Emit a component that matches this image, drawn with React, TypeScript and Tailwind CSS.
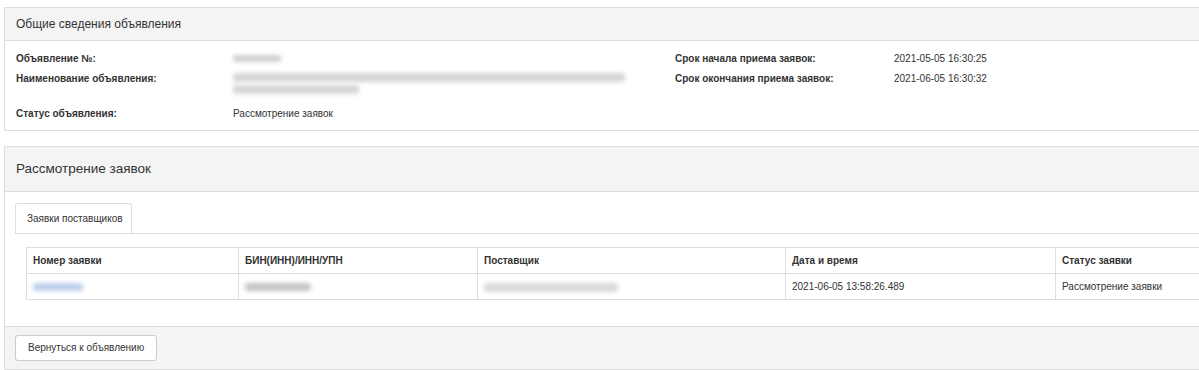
import React from "react";

function Blur({ w, h = 8, color = "#bdbdbd", className = "" }: { w: number; h?: number; color?: string; className?: string }) {
  return (
    <span
      className={"inline-block rounded-[3px] blur-[2px] align-middle " + className}
      style={{ width: w, height: h, backgroundColor: color }}
    />
  );
}

export default function App() {
  return (
    <div className="w-[1199px] h-[370px] overflow-hidden bg-white text-[#333] font-['Liberation_Sans',Arial,sans-serif]">
      <div className="pt-[7px] pl-[4px]">
        {/* Panel 1 */}
        <div className="w-[1215px] border border-[#ddd]">
          <div className="h-[33px] bg-[#f4f4f4] border-b border-[#ddd] px-[11px] flex items-center text-[12px]">
            Общие сведения объявления
          </div>
          <div className="pt-[10px] pb-[9px] px-[11px] flex text-[10px] leading-[15px]">
            <div className="w-[659px] flex flex-col gap-[5px]">
              <div className="flex">
                <div className="w-[217px] font-bold">Объявление №:</div>
                <div className="flex items-center"><Blur w={48} h={7} color="#cfcfcf" /></div>
              </div>
              <div className="flex h-[30px]">
                <div className="w-[217px] font-bold">Наименование объявления:</div>
                <div className="flex flex-col gap-[3px] pt-[2px]">
                  <Blur w={392} h={9} color="#d6d6d6" />
                  <Blur w={126} h={9} color="#d6d6d6" />
                </div>
              </div>
              <div className="flex">
                <div className="w-[217px] font-bold">Статус объявления:</div>
                <div>Рассмотрение заявок</div>
              </div>
            </div>
            <div className="flex flex-col gap-[5px]">
              <div className="flex">
                <div className="w-[219px] font-bold">Срок начала приема заявок:</div>
                <div>2021-05-05 16:30:25</div>
              </div>
              <div className="flex">
                <div className="w-[219px] font-bold">Срок окончания приема заявок:</div>
                <div>2021-06-05 16:30:32</div>
              </div>
            </div>
          </div>
        </div>

        {/* Panel 2 */}
        <div className="mt-[15px] w-[1215px] border border-[#ddd]">
          <div className="h-[45px] bg-[#f4f4f4] border-b border-[#ddd] px-[11px] flex items-center text-[13.5px]">
            Рассмотрение заявок
          </div>
          <div className="px-[10px] pt-[11px] pb-[26px]">
            <div className="flex border-b border-[#ddd]">
              <div className="h-[30px] w-[117px] shrink-0 whitespace-nowrap border-t border-l border-r border-[#ddd] rounded-t-[3px] flex items-center pl-[11px] text-[10px]">
                Заявки поставщиков
              </div>
            </div>
            <div className="mt-[13px] ml-[11px]">
              <table className="table-fixed border-collapse w-[1182px] text-[10px]">
                <colgroup>
                  <col className="w-[212px]" />
                  <col className="w-[239px]" />
                  <col className="w-[308px]" />
                  <col className="w-[270px]" />
                  <col className="w-[153px]" />
                </colgroup>
                <thead>
                  <tr className="h-[26px]">
                    <th className="border border-[#ddd] text-left font-bold px-[6px] py-0">Номер заявки</th>
                    <th className="border border-[#ddd] text-left font-bold px-[6px] py-0">БИН(ИНН)/ИНН/УПН</th>
                    <th className="border border-[#ddd] text-left font-bold px-[6px] py-0">Поставщик</th>
                    <th className="border border-[#ddd] text-left font-bold px-[6px] py-0">Дата и время</th>
                    <th className="border border-[#ddd] text-left font-bold px-[6px] py-0">Статус заявки</th>
                  </tr>
                </thead>
                <tbody>
                  <tr className="h-[26px]">
                    <td className="border border-[#ddd] px-[6px] py-0"><Blur w={50} h={8} color="#bcd0ec" /></td>
                    <td className="border border-[#ddd] px-[6px] py-0"><Blur w={66} h={8} color="#c4c4c4" /></td>
                    <td className="border border-[#ddd] px-[6px] py-0"><Blur w={134} h={9} color="#dadada" /></td>
                    <td className="border border-[#ddd] px-[6px] py-0">2021-06-05 13:58:26.489</td>
                    <td className="border border-[#ddd] px-[6px] py-0">Рассмотрение заявки</td>
                  </tr>
                </tbody>
              </table>
            </div>
          </div>
          <div className="bg-[#f4f4f4] border-t border-[#ddd] px-[10px] pt-[7px] pb-[8px]">
            <button className="h-[26px] px-[12px] bg-white border border-[#ccc] rounded-[3px] text-[10px] text-[#333]">
              Вернуться к объявлению
            </button>
          </div>
        </div>
      </div>
    </div>
  );
}
